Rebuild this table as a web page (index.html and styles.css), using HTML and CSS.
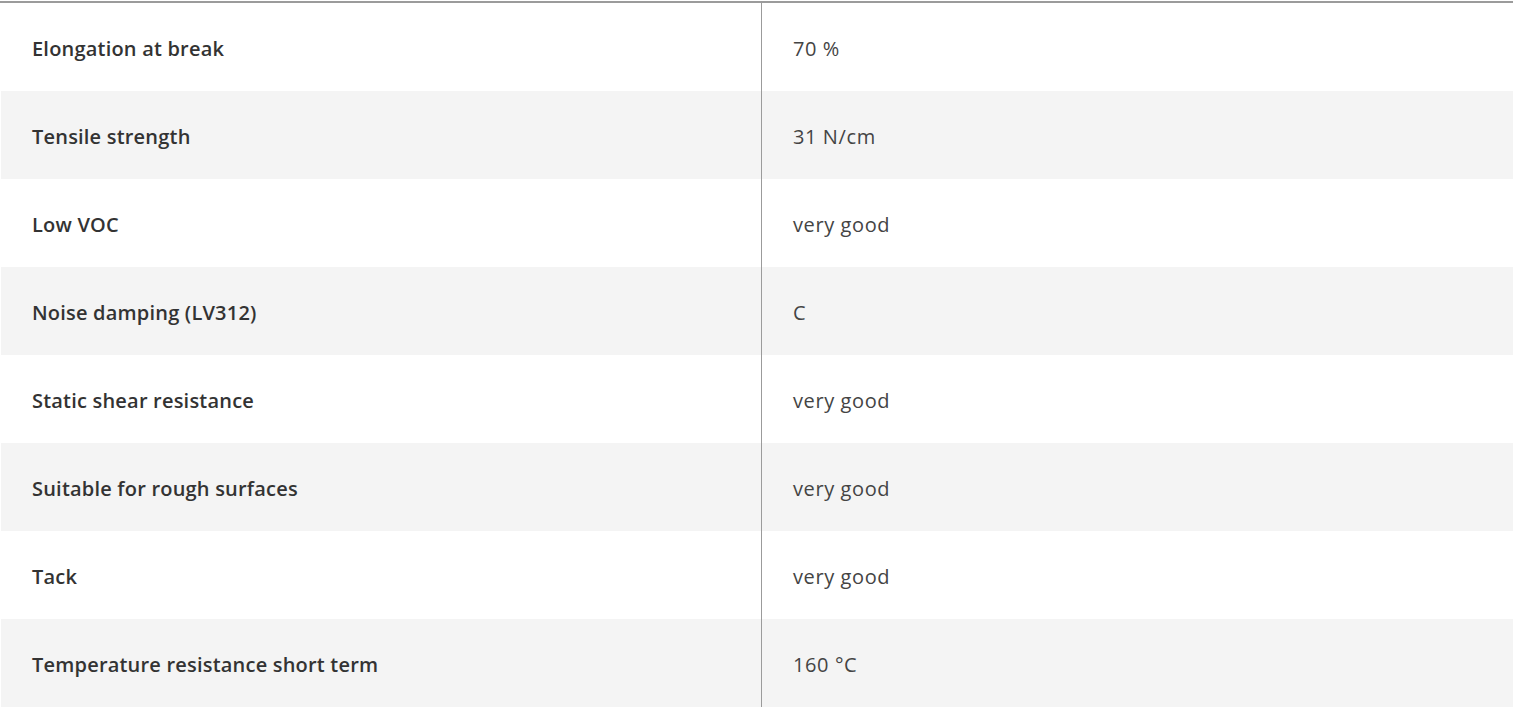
FILE: index.html
```html
<!DOCTYPE html>
<html lang="en">
<head>
<meta charset="utf-8">
<title>Technical data</title>
<link rel="stylesheet" href="styles.css">
</head>
<body>
<div class="spec">
  <table class="spec-table">
    <tbody>
      <tr><th>Elongation at break</th><td>70 %</td></tr>
      <tr><th>Tensile strength</th><td>31 N/cm</td></tr>
      <tr><th>Low VOC</th><td>very good</td></tr>
      <tr><th>Noise damping (LV312)</th><td>C</td></tr>
      <tr><th>Static shear resistance</th><td>very good</td></tr>
      <tr><th>Suitable for rough surfaces</th><td>very good</td></tr>
      <tr><th>Tack</th><td>very good</td></tr>
      <tr><th>Temperature resistance short term</th><td>160 °C</td></tr>
    </tbody>
  </table>
</div>
</body>
</html>
```
FILE: styles.css
```css
html, body {
  margin: 0;
  padding: 0;
  background: #fff;
}
body {
  font-family: "Open Sans", Lato, "Liberation Sans", sans-serif;
  color: #333;
}
.spec {
  margin-top: 1px;
  border-top: 2px solid #9b9b9b;
  padding-left: 1px;
}
.spec-table {
  width: 1512px;
  border-collapse: collapse;
  table-layout: fixed;
}
.spec-table tr {
  height: 88px;
}
.spec-table tr:nth-child(even) {
  background: #f4f4f4;
}
.spec-table th,
.spec-table td {
  padding: 2px 0 0 31px;
  text-align: left;
  vertical-align: middle;
  font-size: 20px;
}
.spec-table th {
  width: 729px;
  font-weight: 600;
  letter-spacing: 0.2px;
  color: #333;
  border-right: 1px solid #9b9b9b;
}
.spec-table td {
  font-weight: 400;
  letter-spacing: 0.6px;
  color: #444;
}
```
